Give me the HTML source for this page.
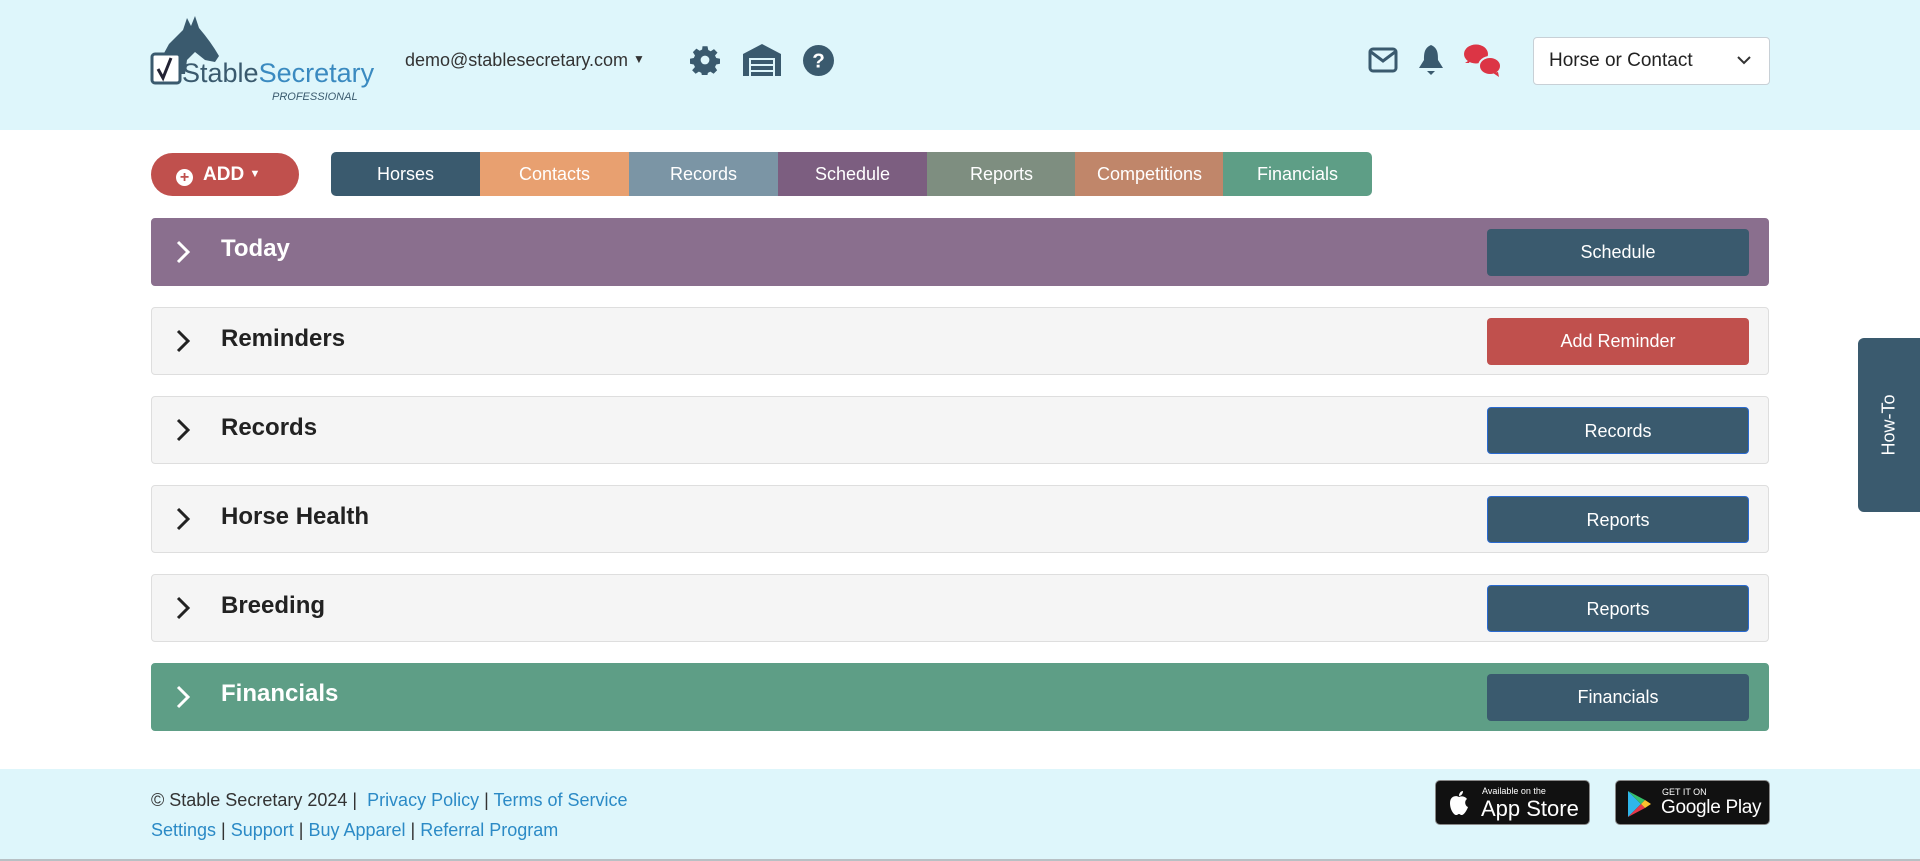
<!DOCTYPE html>
<html><head><meta charset="utf-8"><style>
*{box-sizing:border-box;margin:0;padding:0}
body{width:1920px;height:861px;overflow:hidden;background:#fff;font-family:"Liberation Sans",sans-serif;position:relative}
.hdr{position:absolute;left:0;top:0;width:1920px;height:130px;background:#def6fb}
.abs{position:absolute}
.tab{position:absolute;top:152px;height:44px;width:149px;color:#fff;font-size:18px;text-align:center;line-height:44px}
.panel{position:absolute;left:151px;width:1618px;height:68px;border-radius:4px;background:#f5f5f5;border:1px solid #dedede}
.panel .chev{position:absolute;left:18px;top:20px;width:26px;height:26px}
.panel .t{position:absolute;left:69px;top:0;line-height:66px;font-size:24px;font-weight:bold;color:#222}
.panel .b{position:absolute;left:1335px;top:10px;width:262px;height:47px;border-radius:4px;background:#3a5a6e;color:#fff;font-size:18px;text-align:center;line-height:47px}
.ftr{position:absolute;left:0;top:769px;width:1920px;height:92px;background:#def6fb;border-bottom:2px solid #b8c0c4}
.ftr a{color:#2b8ac6;text-decoration:none}
</style></head><body>
<div class="hdr"></div>
<svg class="abs" style="left:149px;top:14px" width="230" height="92" viewBox="0 0 230 92">
<path d="M8 52 L20 30 L34 16 L38 4 L42 12 L46 2 L50 14 Q62 28 70 42 L66 48 L56 46 L46 38 L38 46 L36 60 L10 60 Z" fill="#3a5a6e"/>
<rect x="3" y="40" width="28" height="29" rx="3" fill="#fff" stroke="#3a5a6e" stroke-width="3"/>
<path d="M9 55 L14 64 L22 44" fill="none" stroke="#223" stroke-width="3"/>
<text x="33" y="68" font-family="Liberation Sans,sans-serif" font-size="27" fill="#3a5a6e">Stable<tspan fill="#3a8ac0">Secretary</tspan></text>
<text x="123" y="86" font-family="Liberation Sans,sans-serif" font-size="11" font-style="italic" fill="#3a5a6e">PROFESSIONAL</text>
</svg>
<div class="abs" style="left:405px;top:50px;font-size:18px;color:#333">demo@stablesecretary.com <span style="font-size:12px;position:relative;top:-3px">&#9660;</span></div>
<svg class="abs" style="left:690px;top:45px" width="30" height="30" viewBox="0 0 24 24"><path fill="#3a5a6e" d="M10 1h4l.6 3 2 1 2.6-1.7 2.8 2.8L20 8.4l1 2 3 .6v4l-3 .6-1 2 1.7 2.6-2.8 2.8-2.6-1.7-2 1-.6 3h-4l-.6-3-2-1-2.6 1.7-2.8-2.8L4 17.6l-1-2-3-.6v-4l3-.6 1-2L2.3 5.7l2.8-2.8L7.7 4.6l2-1z"/><circle cx="12" cy="12" r="3.5" fill="#def6fb"/></svg>
<svg class="abs" style="left:743px;top:44px" width="38" height="32" viewBox="0 0 38 32"><path d="M0 10 L19 0 L38 10 V32 H32 V14 H6 V32 H0Z" fill="#3a5a6e"/><rect x="8" y="16" width="22" height="4" fill="#3a5a6e"/><rect x="8" y="22" width="22" height="4" fill="#3a5a6e"/><rect x="8" y="28" width="22" height="4" fill="#3a5a6e"/></svg>
<svg class="abs" style="left:803px;top:45px" width="31" height="31" viewBox="0 0 30 30"><circle cx="15" cy="15" r="15" fill="#3a5a6e"/><text x="15" y="22" text-anchor="middle" font-family="Liberation Sans" font-weight="bold" font-size="20" fill="#fff">?</text></svg>
<svg class="abs" style="left:1368px;top:47px" width="30" height="26" viewBox="0 0 30 26"><rect x="2" y="2" width="26" height="22" rx="3" fill="none" stroke="#3a5a6e" stroke-width="3"/><path d="M3 5 L15 14 L27 5" fill="none" stroke="#3a5a6e" stroke-width="3"/></svg>
<svg class="abs" style="left:1418px;top:44px" width="26" height="32" viewBox="0 0 26 32"><path d="M13 1 C6 4 6 10 6 16 L1 24 H25 L20 16 C20 10 20 4 13 1Z" fill="#3a5a6e"/><path d="M9 27 H17 L13 31Z" fill="#3a5a6e"/></svg>
<svg class="abs" style="left:1463px;top:44px" width="40" height="34" viewBox="0 0 40 34"><ellipse cx="13" cy="10" rx="12" ry="9.5" fill="#dc3545"/><path d="M2 19 L8 15 L6 19Z" fill="#dc3545"/><ellipse cx="27" cy="22" rx="11" ry="9" fill="#dc3545" stroke="#def6fb" stroke-width="2"/><path d="M36 33 L30 29 L35 28Z" fill="#dc3545"/></svg>
<div class="abs" style="left:1533px;top:37px;width:237px;height:48px;background:#fff;border:1px solid #c8d0d6;border-radius:4px;font-size:19px;color:#222;line-height:46px;padding-left:15px">Horse or Contact
<svg class="abs" style="right:18px;top:18px" width="14" height="9" viewBox="0 0 14 9"><path d="M1 1 L7 7 L13 1" fill="none" stroke="#333" stroke-width="2"/></svg></div>

<div class="abs" style="left:151px;top:153px;width:148px;height:43px;border-radius:22px;background:#c0504d;color:#fff;font-size:19px;font-weight:bold;line-height:43px;padding-left:25px">
<span style="display:inline-block;width:17px;height:17px;border-radius:50%;background:#fff;color:#c0504d;font-size:16px;line-height:17px;text-align:center;vertical-align:-2px;margin-right:10px">+</span>ADD <span style="font-size:11px;position:relative;top:-3px">&#9660;</span></div>

<div class="tab" style="left:331px;background:#3a5a6e;border-radius:5px 0 0 5px">Horses</div>
<div class="tab" style="left:480px;background:#e8a070">Contacts</div>
<div class="tab" style="left:629px;background:#7b95a5">Records</div>
<div class="tab" style="left:778px;background:#7c5e80">Schedule</div>
<div class="tab" style="left:927px;background:#7e8e80">Reports</div>
<div class="tab" style="left:1075px;background:#c0866a">Competitions</div>
<div class="tab" style="left:1223px;background:#5e9e86;border-radius:0 5px 5px 0">Financials</div>

<div class="panel" style="top:218px;background:#8a6f8e;border-color:#8a6f8e"><svg class="chev" viewBox="0 0 26 26"><path d="M8 3 L18 13 L8 23" fill="none" stroke="#fff" stroke-width="3"/></svg><div class="t" style="color:#fff;line-height:60px">Today</div><div class="b">Schedule</div></div>
<div class="panel" style="top:307px"><svg class="chev" viewBox="0 0 26 26"><path d="M8 3 L18 13 L8 23" fill="none" stroke="#222" stroke-width="3"/></svg><div class="t" style="line-height:62px">Reminders</div><div class="b" style="background:#c0504d">Add Reminder</div></div>
<div class="panel" style="top:396px"><svg class="chev" viewBox="0 0 26 26"><path d="M8 3 L18 13 L8 23" fill="none" stroke="#222" stroke-width="3"/></svg><div class="t" style="line-height:62px">Records</div><div class="b" style="border:1px solid #2a6ad0">Records</div></div>
<div class="panel" style="top:485px"><svg class="chev" viewBox="0 0 26 26"><path d="M8 3 L18 13 L8 23" fill="none" stroke="#222" stroke-width="3"/></svg><div class="t" style="line-height:62px">Horse Health</div><div class="b" style="border:1px solid #2a6ad0">Reports</div></div>
<div class="panel" style="top:574px"><svg class="chev" viewBox="0 0 26 26"><path d="M8 3 L18 13 L8 23" fill="none" stroke="#222" stroke-width="3"/></svg><div class="t" style="line-height:62px">Breeding</div><div class="b" style="border:1px solid #2a6ad0">Reports</div></div>
<div class="panel" style="top:663px;background:#5e9e86;border-color:#5e9e86"><svg class="chev" viewBox="0 0 26 26"><path d="M8 3 L18 13 L8 23" fill="none" stroke="#fff" stroke-width="3"/></svg><div class="t" style="color:#fff;line-height:60px">Financials</div><div class="b">Financials</div></div>

<div class="abs" style="left:1858px;top:338px;width:62px;height:174px;background:#3a5a6e;border-radius:6px 0 0 6px"><div class="abs" style="left:31px;top:87px;transform:translate(-50%,-50%) rotate(-90deg);color:#fff;font-size:18px;white-space:nowrap">How-To</div></div>

<div class="ftr">
<div class="abs" style="left:151px;top:16px;font-size:18px;color:#333;line-height:30px">© Stable Secretary 2024 | &nbsp;<a>Privacy Policy</a> | <a>Terms of Service</a><br><a>Settings</a> | <a>Support</a> | <a>Buy Apparel</a> | <a>Referral Program</a></div>
<div class="abs" style="left:1435px;top:11px;width:155px;height:45px;background:#111;border:1px solid #888;border-radius:5px;color:#fff;white-space:nowrap">
<svg class="abs" style="left:12px;top:9px" width="22" height="26" viewBox="0 0 22 26"><path d="M11 7 C8 5 2 6 2 13 C2 20 6 25 8 25 C10 25 10 24 11 24 C12 24 12 25 14 25 C16 25 19 20 20 17 C17 16 16 11 19 9 C17 6 13 6 11 7Z M11 6 C11 3 13 1 15 1 C15 4 13 6 11 6Z" fill="#fff"/></svg>
<div class="abs" style="left:46px;top:5px;font-size:9px">Available on the</div><div class="abs" style="left:45px;top:15px;font-size:22px">App Store</div></div>
<div class="abs" style="left:1615px;top:11px;width:155px;height:45px;background:#111;border:1px solid #888;border-radius:5px;color:#fff;white-space:nowrap">
<svg class="abs" style="left:11px;top:9px" width="26" height="28" viewBox="0 0 26 28"><path d="M1 1 L14 14 L1 27Z" fill="#2fb6ea"/><path d="M1 1 L18 10 L14 14Z" fill="#35c06a"/><path d="M1 27 L18 18 L14 14Z" fill="#e8374a"/><path d="M18 10 L24 14 L18 18 L14 14Z" fill="#fbc02d"/></svg>
<div class="abs" style="left:46px;top:6px;font-size:9px">GET IT ON</div><div class="abs" style="left:45px;top:16px;font-size:19px;letter-spacing:-0.3px">Google Play</div></div>
</div>
</body></html>
